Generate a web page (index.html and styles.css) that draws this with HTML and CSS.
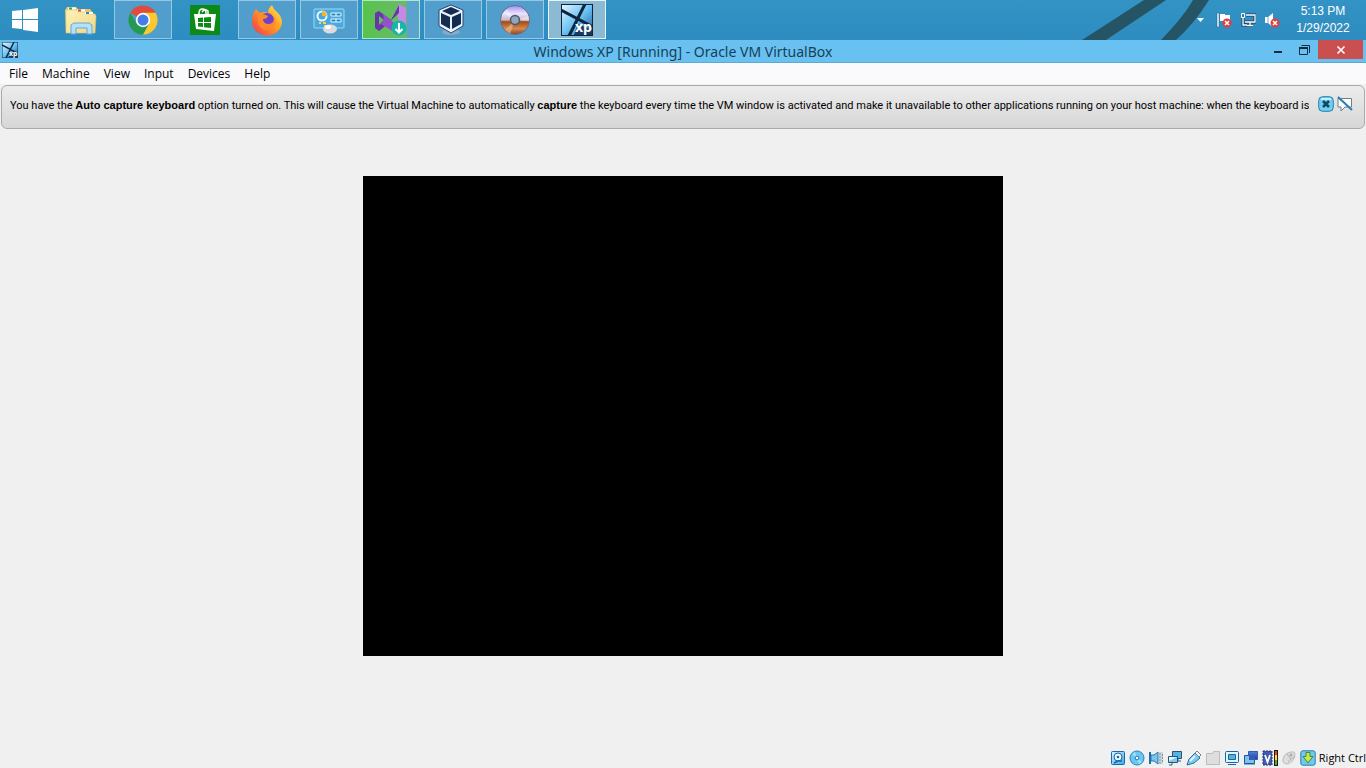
FILE: index.html
```html
<!DOCTYPE html>
<html lang="en">
<head>
<meta charset="utf-8">
<title>Windows XP [Running] - Oracle VM VirtualBox</title>
<link rel="stylesheet" href="styles.css">
</head>
<body>
<svg width="0" height="0" class="defs" aria-hidden="true">
  <defs>
    <linearGradient id="blue" x2="1" y2="1"><stop stop-color="#dff6ff"/><stop offset="1" stop-color="#38a5e4"/></linearGradient>
    <linearGradient id="navy" x2="0" y2="1"><stop stop-color="#5580d8"/><stop offset="1" stop-color="#1d3f9c"/></linearGradient>
    <linearGradient id="fire" x1="1" x2="0" y2="1"><stop stop-color="#fff04a"/><stop offset=".45" stop-color="#ff9b24"/><stop offset="1" stop-color="#f5304e"/></linearGradient>
    <linearGradient id="sky" x2="1" y2="1"><stop stop-color="#e0f5ff"/><stop offset=".5" stop-color="#6cc2f4"/><stop offset="1" stop-color="#1c5a9a"/></linearGradient>
    <linearGradient id="folder" x2="1" y2="1"><stop stop-color="#fff2b8"/><stop offset="1" stop-color="#f0d784"/></linearGradient>
    <linearGradient id="disc" x2="0" y2="1"><stop stop-color="#9b8df0"/><stop offset=".28" stop-color="#e8e4ff"/><stop offset=".5" stop-color="#c9b8c8"/><stop offset=".56" stop-color="#a04c18"/><stop offset=".8" stop-color="#d48a50"/><stop offset="1" stop-color="#8c4420"/></linearGradient>
    <symbol id="xp" viewBox="0 0 32 32">
      <rect width="32" height="32" fill="#10253c"/>
      <rect x="1" y="1" width="30" height="30" fill="url(#sky)"/>
      <path d="M0 6L32 23M24 0L8 32" stroke="#10253c" stroke-width="3"/>
      <path d="M17 20l14 6v5H13z" fill="#17395f"/>
    </symbol>
  </defs>
</svg>
<header class="taskbar">
  <nav class="tasks" aria-label="Taskbar">
    <button class="start" aria-label="Start"><svg width="28" height="28" viewBox="0 0 28 28"><path fill="#fff" d="M2 5l10-1v9H2z M13 4l15-2v11H13z M2 14h10v9L2 22z M13 14h15v12l-15-2z"/></svg></button>
    <button class="task" aria-label="File Explorer"><svg width="34" height="32" viewBox="0 0 34 32"><path d="M1 6l2-3h9l2 2h12l3 4v20H2z" fill="#e8c66a"/><path d="M2 6h10l2 2h7l1 2h9l1 2-1 17H2z" fill="url(#folder)" stroke="#e2c673" stroke-width=".6"/><path d="M4 4.500h8M13 6.500h8M21 9h8" stroke="#fff" stroke-width="2"/><path d="M5 4.500h3" stroke="#2da568" stroke-width="2"/><path d="M14 6.500h3" stroke="#cf442d" stroke-width="2"/><path d="M22 9h3" stroke="#2c87c8" stroke-width="2"/><path d="M7 30V21l3-2h15l3 2v9h-5v-6H12v6z" fill="#b5e0f7" stroke="#5fa9dc"/></svg></button>
    <button class="task open" aria-label="Google Chrome"><svg width="32" height="32" viewBox="0 0 32 32"><path d="M16 16L3.300 8.700A14.700 14.700 0 0 1 28.700 8.700L16 9z" fill="#e14b3b"/><path d="M3.300 8.700A14.700 14.700 0 0 0 16 30.700L22 20 16 16 9.500 19z" fill="#229b50"/><path d="M28.700 8.700H16l6 11L16 30.700A14.700 14.700 0 0 0 28.700 8.700z" fill="#fbc92f"/><circle cx="16" cy="16" r="7.200" fill="#fff"/><circle cx="16" cy="16" r="5.500" fill="#437ee8"/></svg></button>
    <button class="task" aria-label="Store"><svg width="30" height="30" viewBox="0 0 30 30"><path fill="#0b8b15" d="M0 0h30v30H0z"/><path d="M9 10V8q0-4 3.500-4T16 8v2M12 7q3-4 6-1v4" fill="none" stroke="#fff" stroke-width="1.500"/><path d="M4 9h22l-2 17-18-2z" fill="#fff"/><path d="M8 13l5-.5V17H8z M14 12.400l7-.4v5h-7z M8 18h5v4l-5-.5z M14 18h7v5l-7-.8z" fill="#0b8b15"/></svg></button>
    <button class="task open" aria-label="Firefox"><svg width="32" height="32" viewBox="0 0 32 32"><path d="M5 5l4 4q4-2 8 0 0-5 4-8 1 4 5 7 5 5 5 10A15 14 0 0 1 1 17Q1 10 5 5z" fill="url(#fire)"/><circle cx="16" cy="16" r="7" fill="#7140c8"/><path d="M7 11q6-2 10 1-1 3-5 3 0 5 6 5 6-1 5-8 4 9-3 13-8 3-12-4-2-5-1-10z" fill="#ff8a2c"/></svg></button>
    <button class="task open" aria-label="Control Panel"><svg width="32" height="32" viewBox="0 0 32 32"><rect x="1" y="5" width="30" height="19" rx="1" fill="#4aa9dc" stroke="#9cdcf6"/><circle cx="9" cy="12" r="4.500" fill="none" stroke="#e6faff" stroke-width="2"/><path d="M9 12V7a5 5 0 0 1 5 5z" fill="#f6b32c"/><path d="M18 9h10v3H18z M18 15h10v3H18z" fill="#2286c6" stroke="#e4f8ff"/><path d="M23 9v3M23 15v3" stroke="#fff"/><path d="M6 19h2M10 19h3M11 22h2" stroke="#ffd05a" stroke-width="2"/><ellipse cx="17" cy="25" rx="7" ry="4.500" fill="#dcdcdc"/><ellipse cx="15" cy="23" rx="3" ry="2" fill="#fff"/></svg></button>
    <button class="task open installer" aria-label="Visual Studio Installer"><svg width="32" height="32" viewBox="0 0 32 32"><path d="M23 0l8 4v23l-8 4z" fill="#c48ae6"/><path d="M0 9l4-2 4 3 8 6L24 1v8L8 24l-4 3-4-3z M4 12v9l5-5z" fill="#6a35a8" fill-rule="evenodd"/><path d="M8 10l16 13v8L6 20l3-4z" fill="#9152cc"/><circle cx="24" cy="24" r="7.500" fill="#15b8a5"/><path d="M24 19v9M20.500 25l3.500 3.500 3.500-3.500" fill="none" stroke="#fff" stroke-width="2"/></svg></button>
    <button class="task open" aria-label="Oracle VM VirtualBox"><svg width="32" height="32" viewBox="0 0 32 32"><ellipse cx="14" cy="28" rx="9" ry="3" fill="#8ba9c9"/><path d="M14 1l12 5v16l-12 7L2 22V6z" fill="#e8f2ff" stroke="#29486e"/><path d="M14 3l9 4-9 4-9-4z M4 9l9 4v12l-9-5z M24 9l-9 4v12l9-5z" fill="#132c50"/></svg></button>
    <button class="task open" aria-label="Disc Image"><svg width="32" height="32" viewBox="0 0 32 32"><circle cx="16" cy="16" r="14.500" fill="url(#disc)" stroke="#706a86"/><path d="M16 16L4 9l4-4z M16 16l14-4v5z" fill="#fff" opacity=".4"/><path d="M16 16l-5 14-5-4z" fill="#f0ba8b" opacity=".6"/><circle cx="16" cy="16" r="4.500" fill="#8ba8bf" stroke="#5d5363" stroke-width="1.500"/></svg></button>
    <button class="task open active" aria-label="Windows XP virtual machine"><svg width="32" height="32" viewBox="0 0 32 32"><use href="#xp" width="32" height="32"/><text x="14" y="28" class="xp-text">xp</text></svg></button>
  </nav>
  <svg class="wall" width="130" height="40" viewBox="0 0 130 40" aria-hidden="true"><path d="M0 40L62 0h22L24 40z M79 40Q102 16 111 0h16Q112 24 94 40z" fill="#255465"/></svg>
  <div class="tray">
    <button class="tray-btn" aria-label="Show hidden icons"><svg width="9" height="6" viewBox="0 0 9 6"><path d="M1 1h7L4.500 5z" fill="#fff"/></svg></button>
    <button class="tray-btn" aria-label="Action Center"><svg width="16" height="16" viewBox="0 0 16 16"><path d="M1 1h2v14H1z" fill="#fff" stroke="#24567b" stroke-width=".5"/><path d="M4 2h5v1h5v6H4z" fill="#fff"/><circle cx="11" cy="11" r="4.500" fill="#df3f3e"/><path d="M9 9l4 4M13 9l-4 4" stroke="#fff" stroke-width="1.500"/></svg></button>
    <button class="tray-btn" aria-label="Network"><svg width="16" height="16" viewBox="0 0 16 16"><path d="M6 3h9v7H5M3 6v7h4M10 10v3M7 13.500h6" fill="none" stroke="#163f60" stroke-width="3"/><path d="M6 3h9v7H5M3 6v7h4M10 10v3M7 13.500h6" fill="none" stroke="#fff" stroke-width="1.300"/><path d="M1.500 1.500h3v4h-3z" fill="#2b80b4" stroke="#fff"/></svg></button>
    <button class="tray-btn" aria-label="Volume muted"><svg width="16" height="16" viewBox="0 0 16 16"><path d="M1 5h3l5-4v14l-5-4H1z" fill="#fff"/><path d="M4 5v6" stroke="#6faacd"/><circle cx="11" cy="11" r="4.500" fill="#df3f3e"/><path d="M9 9l4 4M13 9l-4 4" stroke="#fff" stroke-width="1.500"/></svg></button>
    <time class="clock" datetime="2022-01-29T17:13"><span>5:13 PM</span><span>1/29/2022</span></time>
  </div>
</header>
<main class="window">
  <div class="titlebar">
    <svg class="app-icon" width="16" height="16" viewBox="0 0 32 32"><use href="#xp" width="32" height="32"/><text x="14" y="28" class="xp-text">xp</text></svg>
    <h1 class="title">Windows XP [Running] - Oracle VM VirtualBox</h1>
    <div class="controls">
      <button class="control" aria-label="Minimize"><svg width="12" height="12" viewBox="0 0 12 12"><path d="M1 7h8v2H1z" fill="#152c3d"/></svg></button>
      <button class="control" aria-label="Restore"><svg width="12" height="12" viewBox="0 0 12 12"><path d="M2.500 1.500h8V9M.5 4h8v6.500h-8z" fill="none" stroke="#152c3d"/><path d="M0 3h9v2H0z" fill="#152c3d"/></svg></button>
      <button class="control close" aria-label="Close"><svg width="10" height="10" viewBox="0 0 10 10"><path d="M1.500 1.500l7 7M8.500 1.500l-7 7" stroke="#fff" stroke-width="1.600"/></svg></button>
    </div>
  </div>
  <nav class="menu" aria-label="Menu">
    <button>File</button><button>Machine</button><button>View</button><button>Input</button><button>Devices</button><button>Help</button>
  </nav>
  <section class="notice">
    <p class="message">You have the <b>Auto capture keyboard</b> option turned on. This will cause the Virtual Machine to automatically <b>capture</b> the keyboard every time the VM window is activated and make it unavailable to other applications running on your host machine: when the keyboard is</p>
    <div class="notice-actions">
      <button aria-label="Close message"><svg width="16" height="16" viewBox="0 0 16 16"><rect x=".7" y=".7" width="14.600" height="14.600" rx="4" fill="#73ceee" stroke="#277fae"/><path d="M3 3h10" stroke="#c4f1ff" stroke-width="2"/><path d="M5 5l6 6M11 5l-6 6" stroke="#104968" stroke-width="2.600"/></svg></button>
      <button aria-label="Do not show again"><svg width="16" height="16" viewBox="0 0 16 16"><path d="M1 2.500h13.500V11H8l-4 4v-4H1z" fill="#fafdff" stroke="#6f7f8a"/><path d="M1 1l14 13" stroke="#297dae" stroke-width="2"/></svg></button>
    </div>
  </section>
  <section class="viewport" aria-label="Guest display"><div class="screen"></div></section>
  <footer class="status">
    <button aria-label="Hard disks"><svg width="16" height="16" viewBox="0 0 16 16"><rect x="1.500" y="1.500" width="13" height="13" rx="1" fill="url(#blue)" stroke="#1769ab"/><circle cx="8" cy="7" r="4" fill="#e8f8ff" stroke="#1769ab"/><circle cx="8" cy="7" r="1.300" fill="#1769ab"/><path d="M4 13l4-2h4" fill="none" stroke="#1769ab" stroke-width="1.500"/></svg></button>
    <button aria-label="Optical drives"><svg width="16" height="16" viewBox="0 0 16 16"><circle cx="8" cy="8" r="7" fill="#6cc6f4" stroke="#2785be"/><path d="M8 8L3 4l3-2z M8 8l5 4-3 2z" fill="#a5e0fa"/><circle cx="8" cy="8" r="1.800" fill="#fff" stroke="#207bb6"/></svg></button>
    <button aria-label="Audio"><svg width="16" height="16" viewBox="0 0 16 16"><path d="M2 2v12" stroke="#1e6daa" stroke-width="2"/><path d="M3 5h3l4-3v12l-4-3H3z" fill="#77c4ed" stroke="#2a79b0"/><path d="M11 2h4v12h-4z" fill="#ccd7dd"/><path d="M12 3v11M14.500 4v9" stroke="#7f96a5" stroke-dasharray="2 1"/></svg></button>
    <button aria-label="Network adapters"><svg width="16" height="16" viewBox="0 0 16 16"><path d="M5.500 1.500h9v7h-9z" fill="#55b3e4" stroke="#26547a"/><path d="M11 9v2h3M5 13v2H2" fill="none" stroke="#45586a"/><path d="M1.500 6.500h9v6h-9z" fill="#7fcbf0" stroke="#26547a"/><path d="M2 7h8L2 11z" fill="#e8f8ff"/></svg></button>
    <button aria-label="USB devices"><svg width="16" height="16" viewBox="0 0 16 16"><path d="M1 15l2-6 6-6 5 5-6 5z" fill="#7acbf2" stroke="#2d6f9c"/><path d="M9 3l2-2 4 4-2 2z" fill="#eef6fa" stroke="#75828c"/><path d="M4 11l5-5" stroke="#dff8ff" stroke-width="2"/></svg></button>
    <button aria-label="Shared folders"><svg width="16" height="16" viewBox="0 0 16 16"><path d="M1.500 3.500h6l1-2h6v13h-13z" fill="#dedede" stroke="#bcbcbc"/></svg></button>
    <button aria-label="Display"><svg width="16" height="16" viewBox="0 0 16 16"><rect x="1.500" y="1.500" width="13" height="11" rx="1" fill="#dff8ff" stroke="#17669d"/><path d="M4.500 4.500h7v5h-7z" fill="#55b3e4" stroke="#17669d"/><path d="M4 14.500h8" stroke="#17669d"/></svg></button>
    <button aria-label="Recording"><svg width="16" height="16" viewBox="0 0 16 16"><path d="M5.500 1.500h9v8h-9z" fill="url(#navy)" stroke="#315fb0"/><path d="M1.500 5.500h10v8h-10z" fill="#7cc2ed" stroke="#22569d"/><path d="M6 5h6v5H6z" fill="#315db9"/><path d="M1 14.500h11" stroke="#8baaca"/></svg></button>
    <button aria-label="Virtualization"><svg width="16" height="16" viewBox="0 0 16 16"><path d="M1 1h9v14H1z" fill="#405bb2" stroke="#253773" stroke-dasharray="2 1"/><path d="M3 5l2.500 7L8 5" fill="none" stroke="#fff" stroke-width="1.800"/><path d="M12 0h4v16h-4z" fill="#211b12"/><path d="M13 1h2v5h-2z" fill="#df4921"/><path d="M13 5h2v5h-2z" fill="#ffdc34"/><path d="M13 10h2v5h-2z" fill="#50a944"/></svg></button>
    <button aria-label="Mouse integration"><svg width="16" height="16" viewBox="0 0 16 16"><path d="M2 9q-1 5 4 5 8-2 8-10 0-3-4-2-7 1-8 7z" fill="#ddd" stroke="#bdbdbd"/><path d="M6 4l4 5 4-3M10 9l-3 3" fill="none" stroke="#b2b2b2"/><circle cx="10" cy="5" r="1.500" fill="#aaa"/></svg></button>
    <button class="key"><svg width="16" height="16" viewBox="0 0 16 16"><rect x=".8" y=".8" width="14.400" height="14.400" rx="2" fill="#72c9ef" stroke="#277da8"/><path d="M6 2.500h4v4h3L8 13 3 6.500h3z" fill="#c7e84b" stroke="#438641"/></svg><span>Right Ctrl</span></button>
  </footer>
</main>
</body>
</html>
```
FILE: styles.css
```css
* { box-sizing: border-box; }
body { margin: 0; min-height: 100vh; display: flex; flex-direction: column; background: #f0f0f0; color: #000; font: 12px/16px "Open Sans", "Noto Sans", sans-serif; }
button { margin: 0; padding: 0; border: 0; background: none; color: inherit; font: inherit; display: flex; align-items: center; justify-content: center; }
svg { display: block; flex: none; }
.defs { position: absolute; }
.taskbar { height: 40px; display: flex; background: linear-gradient(#3393c4, #2e8cc0); }
.tasks { display: flex; gap: 4px; }
.start { width: 48px; }
.task { width: 58px; height: 39px; border: 1px solid transparent; }
.open { background: #519dcb; border-color: #94c8e4; }
.installer { background: linear-gradient(90deg, #57c34c, #6cb96a 76%, #5aa3cf 80%); border-color: #a9e9c5; }
.active { background: #8cb9d3; border-color: #e5f3fa; }
.xp-text { font: bold 14px "Open Sans", sans-serif; fill: #fff; }
.wall { margin-left: auto; }
.tray { display: flex; align-items: center; gap: 8px; margin-left: -20px; padding-right: 16px; color: #fff; }
.tray-btn { min-width: 16px; height: 40px; }
.clock { display: flex; flex-direction: column; align-items: center; margin-left: 8px; width: 54px; white-space: nowrap; font: 12px/17px "Liberation Sans", sans-serif; }
.window { flex: 1; display: flex; flex-direction: column; }
.titlebar { height: 23px; display: grid; grid-template-columns: 128px 1fr 128px; background: #68c1f0; border-bottom: 1px solid #5fa9d0; }
.app-icon { margin: 2px; }
.title { margin: 0; text-align: center; font: 14px/24px "Noto Sans", "Open Sans", sans-serif; color: #173f58; }
.controls { display: flex; justify-content: flex-end; padding-right: 3px; }
.control { width: 26px; height: 19px; }
.close { width: 45px; background: #c9504f; }
.menu { height: 21px; display: flex; gap: 14px; padding: 0 9px; background: #fafafc; }
.notice { margin: 1px 1px 0; height: 44px; display: flex; align-items: flex-start; justify-content: space-between; gap: 4px; padding: 10px 11px 0 8px; border: 1px solid #aaa; border-radius: 6px; background: linear-gradient(#ececec, #d7d7d7); }
.message { margin: 0; min-width: 0; overflow: hidden; white-space: nowrap; font: 11px/18px Roboto, sans-serif; }
.message b { font-family: "Liberation Sans", sans-serif; }
.notice-actions { display: flex; gap: 3px; }
.viewport { flex: 1; display: grid; place-items: center; padding: 0 0 44px; }
.screen { width: 47%; max-width: 640px; aspect-ratio: 4 / 3; background: #000; }
.status { height: 21px; display: flex; align-items: center; justify-content: flex-end; gap: 3px; }
.key { gap: 3px; font-size: 11px; }
```
